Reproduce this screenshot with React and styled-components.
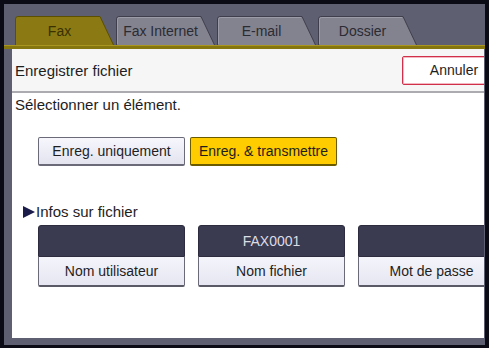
import React from "react";
import styled, { createGlobalStyle } from "styled-components";

const Global = createGlobalStyle`
  html, body { margin: 0; padding: 0; background: #0b0b14; }
  body { font-family: "Liberation Sans", Arial, sans-serif; }
`;

const Screen = styled.div`
  width: 489px;
  height: 348px;
  box-sizing: border-box;
  padding: 4px 4px 3px 4px;
  background: #0b0b16;
  overflow: hidden;
`;

const Frame = styled.div`
  height: 100%;
  display: flex;
  flex-direction: column;
  background: #5f5f72;
`;

const TabBar = styled.div`
  height: 41px;
  display: flex;
  align-items: flex-end;
  gap: 2px;
  padding-left: 11px;
  box-sizing: border-box;
`;

const TabItem = styled.div`
  position: relative;
  width: 99px;
  height: 29px;
  display: flex;
  align-items: center;
  justify-content: center;
  padding-right: 10px;
  box-sizing: border-box;
  font-size: 14px;
  color: ${(p) => (p.$active ? "#3a3000" : "#2b2b33")};
  & > span { position: relative; }
`;

const TabShape = styled.svg`
  position: absolute;
  inset: 0;
  width: 100%;
  height: 100%;
`;

const GoldLine = styled.div`
  height: 3px;
  background: #86760f;
  border-top: 1px solid #a89620;
`;

const Body = styled.div`
  flex: 1;
  display: flex;
  padding: 0 1px 7px 8px;
  min-height: 0;
`;

const Panel = styled.div`
  flex: 1;
  background: #ffffff;
  display: flex;
  flex-direction: column;
  overflow: hidden;
`;

const Header = styled.div`
  height: 42px;
  flex: none;
  display: flex;
  align-items: center;
  padding-left: 3px;
  background: #f6f6f6;
  border-bottom: 2px solid #acacb0;
  font-size: 15px;
  color: #1e1e1e;
`;

const CancelButton = styled.div`
  margin-left: auto;
  margin-right: -22px;
  width: 104px;
  height: 29px;
  box-sizing: border-box;
  border: 1px solid #d0304a;
  box-shadow: inset 0 0 0 1px #f4b8c2;
  border-radius: 2px;
  background: #ffffff;
  display: flex;
  align-items: center;
  justify-content: center;
  font-size: 14px;
  color: #1e1e1e;
`;

const Prompt = styled.div`
  margin-top: 2px;
  height: 20px;
  line-height: 20px;
  padding-left: 3px;
  font-size: 15px;
  color: #1e1e1e;
`;

const ButtonRow = styled.div`
  margin-top: 22px;
  padding-left: 26px;
  display: flex;
  gap: 5px;
`;

const Choice = styled.div`
  width: 147px;
  height: 29px;
  box-sizing: border-box;
  display: flex;
  align-items: center;
  justify-content: center;
  font-size: 14px;
  white-space: nowrap;
  color: #1e1e1e;
  border: 1px solid ${(p) => (p.$selected ? "#6a5a00" : "#6a6a78")};
  border-bottom-width: 2px;
  border-radius: 2px;
  background: ${(p) =>
    p.$selected ? "#ffcc00" : "linear-gradient(#f6f6fc, #e4e4f0)"};
`;

const SectionTitle = styled.div`
  margin-top: 36px;
  height: 20px;
  line-height: 20px;
  padding-left: 11px;
  display: flex;
  align-items: center;
  font-size: 15px;
  color: #1e1e1e;
`;

const Arrow = styled.span`
  width: 0;
  height: 0;
  border-top: 6px solid transparent;
  border-bottom: 6px solid transparent;
  border-left: 12px solid #1c1c4a;
  margin-right: 1px;
`;

const CardRow = styled.div`
  margin-top: 3px;
  padding-left: 26px;
  display: flex;
  gap: 13px;
`;

const Card = styled.div`
  width: 147px;
  flex: none;
  display: flex;
  flex-direction: column;
`;

const CardValue = styled.div`
  height: 32px;
  box-sizing: border-box;
  background: #3a3a50;
  border: 1px solid #2c2c3e;
  border-radius: 3px 3px 0 0;
  display: flex;
  align-items: center;
  justify-content: center;
  font-size: 14px;
  color: #dcdce4;
`;

const CardLabel = styled.div`
  height: 30px;
  box-sizing: border-box;
  background: linear-gradient(#f4f4fb, #e6e6f2);
  border: 1px solid #6a6a78;
  border-top: none;
  border-bottom: 2px solid #5a5a66;
  border-radius: 0 0 2px 2px;
  display: flex;
  align-items: center;
  justify-content: center;
  font-size: 14px;
  color: #1e1e1e;
`;

function Tab({ label, active }) {
  return (
    <TabItem $active={active}>
      <TabShape viewBox="0 0 99 29" preserveAspectRatio="none">
        <path
          d="M0.5 29 L0.5 3 Q0.5 0.5 3 0.5 L85 0.5 L98.5 29"
          fill={active ? "#8b7a14" : "#83838f"}
          stroke={active ? "#5c5000" : "#3e3e4c"}
          strokeWidth="1"
        />
        {!active && (
          <path d="M1.5 28 L1.5 3.5 Q1.5 1.5 3.5 1.5 L84 1.5" fill="none" stroke="#9c9ca8" strokeWidth="1" />
        )}
      </TabShape>
      <span>{label}</span>
    </TabItem>
  );
}

const tabs = [
  { label: "Fax", active: true },
  { label: "Fax Internet" },
  { label: "E-mail" },
  { label: "Dossier" },
];

const cards = [
  { value: "", label: "Nom utilisateur" },
  { value: "FAX0001", label: "Nom fichier" },
  { value: "", label: "Mot de passe" },
];

export default function App() {
  return (
    <>
      <Global />
      <Screen>
        <Frame>
          <TabBar>
            {tabs.map((t) => (
              <Tab key={t.label} label={t.label} active={t.active} />
            ))}
          </TabBar>
          <GoldLine />
          <Body>
            <Panel>
              <Header>
                Enregistrer fichier
                <CancelButton>Annuler</CancelButton>
              </Header>
              <Prompt>Sélectionner un élément.</Prompt>
              <ButtonRow>
                <Choice>Enreg. uniquement</Choice>
                <Choice $selected>Enreg. &amp; transmettre</Choice>
              </ButtonRow>
              <SectionTitle>
                <Arrow />
                Infos sur fichier
              </SectionTitle>
              <CardRow>
                {cards.map((c) => (
                  <Card key={c.label}>
                    <CardValue>{c.value}</CardValue>
                    <CardLabel>{c.label}</CardLabel>
                  </Card>
                ))}
              </CardRow>
            </Panel>
          </Body>
        </Frame>
      </Screen>
    </>
  );
}
